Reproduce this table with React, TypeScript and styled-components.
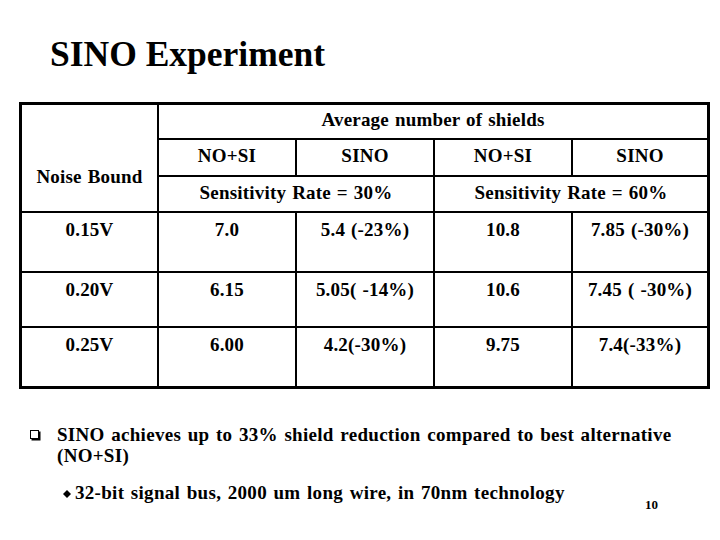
import React from 'react';
import styled, { createGlobalStyle } from 'styled-components';

const Global = createGlobalStyle`
  html, body { margin: 0; padding: 0; background: #fff; }
  body { font-family: "Liberation Serif", "Times New Roman", serif; color: #000; }
`;

const Slide = styled.div`
  width: 720px;
  height: 540px;
  background: #fff;
  display: flex;
  flex-direction: column;
  overflow: hidden;
  font-family: "Liberation Serif", "Times New Roman", serif;
  font-weight: bold;
`;

const Title = styled.h1`
  margin: 37px 0 0 50px;
  font-size: 35.5px;
  line-height: 35px;
  font-weight: bold;
`;

const Grid = styled.div`
  margin: 30px 0 0 19px;
  width: 691px;
  box-sizing: border-box;
  display: grid;
  grid-template-columns: 135px 136px 136px 136px 134px;
  grid-template-rows: 33px 35px 34px 58px 53px 58px;
  gap: 2px;
  padding: 3px;
  background: #000;
  font-size: 19px;
  line-height: 19px;
  letter-spacing: 0.2px;
  word-spacing: 1px;
`;

type V = 'center' | 'top' | 'low';

const Cell = styled.div<{ $v?: V; $cs?: number; $rs?: number }>`
  background: #fff;
  display: flex;
  justify-content: center;
  align-items: ${(p) => (p.$v === 'center' ? 'center' : 'flex-start')};
  padding: ${(p) =>
    p.$v === 'center' ? '0 0 4px' : p.$v === 'low' ? '62px 0 0' : '7px 0 0'};
  grid-column: span ${(p) => p.$cs ?? 1};
  grid-row: span ${(p) => p.$rs ?? 1};
  white-space: pre;
`;

const List = styled.ul`
  margin: 35px 0 0;
  padding: 0;
  list-style: none;
  font-size: 19px;
  line-height: 21px;
  letter-spacing: 0.3px;
  word-spacing: 1.5px;
`;

const Item = styled.li`
  display: flex;
  align-items: flex-start;
  padding-left: 30px;
`;

const BoxMark = styled.span`
  flex: none;
  width: 9px;
  height: 9px;
  margin-top: 6px;
  margin-right: 18px;
  border: 1px solid #000;
  box-shadow: 1.5px 1.5px 0 #000;
  box-sizing: border-box;
`;

const ItemText = styled.span`
  flex: 1;
`;

const SubRow = styled.div`
  display: flex;
  align-items: flex-start;
  margin-top: 16px;
  padding-left: 63px;
  padding-right: 62px;
`;

const Diamond = styled.svg`
  flex: none;
  width: 8px;
  height: 8px;
  margin-top: 8px;
  margin-right: 4px;
`;

const SubText = styled.span`
  font-size: 19px;
  line-height: 21px;
  letter-spacing: 0.3px;
  word-spacing: 1.5px;
`;

const PageNo = styled.span`
  margin-left: auto;
  margin-top: 16px;
  font-size: 13px;
  line-height: 13px;
`;

const rows: string[][] = [
  ['0.15V', '7.0', '5.4 (-23%)', '10.8', '7.85 (-30%)'],
  ['0.20V', '6.15', '5.05( -14%)', '10.6', '7.45 ( -30%)'],
  ['0.25V', '6.00', '4.2(-30%)', '9.75', '7.4(-33%)'],
];

export default function App() {
  return (
    <>
      <Global />
      <Slide>
        <Title>SINO Experiment</Title>
        <Grid>
          <Cell $v="low" $rs={3}>Noise Bound</Cell>
          <Cell $v="center" $cs={4}>Average number of shields</Cell>
          <Cell $v="center">NO+SI</Cell>
          <Cell $v="center">SINO</Cell>
          <Cell $v="center">NO+SI</Cell>
          <Cell $v="center">SINO</Cell>
          <Cell $v="center" $cs={2}>Sensitivity Rate = 30%</Cell>
          <Cell $v="center" $cs={2}>Sensitivity Rate = 60%</Cell>
          {rows.map((r) => r.map((c, i) => <Cell key={r[0] + i}>{c}</Cell>))}
        </Grid>
        <List>
          <Item>
            <BoxMark />
            <ItemText>
              SINO achieves up to 33% shield reduction compared to best alternative
              <br />
              (NO+SI)
            </ItemText>
          </Item>
        </List>
        <SubRow>
          <Diamond viewBox="0 0 8 8">
            <path d="M4 0 L8 4 L4 8 L0 4 Z" fill="#000" />
          </Diamond>
          <SubText>32-bit signal bus, 2000 um long wire, in 70nm technology</SubText>
          <PageNo>10</PageNo>
        </SubRow>
      </Slide>
    </>
  );
}
